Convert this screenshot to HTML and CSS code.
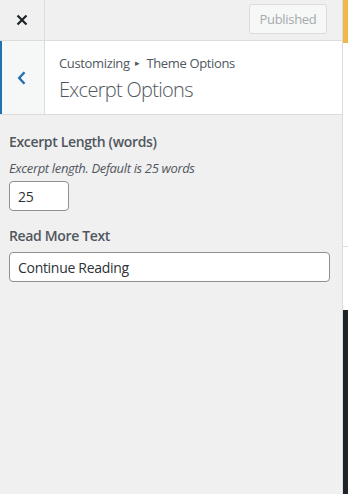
FILE: index.html
```html
<!DOCTYPE html>
<html lang="en">
<head>
    <meta charset="UTF-8">
    <meta name="viewport" content="width=device-width, initial-scale=1.0">
    <title>Customizer</title>
    <link rel="stylesheet" href="styles.css">
</head>
<body>
    <div class="layout">
        <aside class="sidebar">
            <header class="topbar">
                <a href="#" class="close-btn" aria-label="Close">
                    <svg width="12" height="12" viewBox="0 0 12 12"><path d="M1.5 1.5l9 9M10.5 1.5l-9 9" stroke="#1d2327" stroke-width="2.2" fill="none"/></svg>
                </a>
                <div class="topbar-actions">
                    <button class="publish-btn" disabled>Published</button>
                </div>
            </header>
            <div class="section-head">
                <a href="#" class="back-btn" aria-label="Back">
                    <svg width="9" height="14" viewBox="0 0 9 14"><path d="M7.5 1.2L2.2 7l5.3 5.8" stroke="#2271b1" stroke-width="2.4" fill="none"/></svg>
                </a>
                <div class="section-title">
                    <span class="crumbs">Customizing <span class="arrow">&#9656;</span> Theme Options</span>
                    <h2>Excerpt Options</h2>
                </div>
            </div>
            <div class="controls">
                <div class="control">
                    <label for="excerptLength">Excerpt Length (words)</label>
                    <span class="desc">Excerpt length. Default is 25 words</span>
                    <input type="text" id="excerptLength" class="small-input" value="25">
                </div>
                <div class="control">
                    <label for="readMore">Read More Text</label>
                    <input type="text" id="readMore" class="wide-input" value="Continue Reading">
                </div>
            </div>
        </aside>
        <div class="preview">
            <div class="preview-bar"></div>
            <div class="preview-page"></div>
            <div class="preview-dark"></div>
        </div>
    </div>
</body>
</html>
```

FILE: styles.css
```css
* {
    margin: 0;
    padding: 0;
    box-sizing: border-box;
}

body {
    font-family: "Open Sans", "Noto Sans", sans-serif;
    font-size: 13px;
    letter-spacing: -0.35px;
    color: #50575e;
    background-color: #f0f0f1;
}

.layout {
    display: flex;
    height: 494px;
}

.sidebar {
    width: 343px;
    background-color: #f0f0f1;
    border-right: 1px solid #dcdcde;
}

.topbar {
    display: flex;
    height: 41px;
    border-bottom: 1px solid #dcdcde;
}

.close-btn {
    width: 45px;
    display: flex;
    align-items: center;
    justify-content: center;
    border-right: 1px solid #dcdcde;
}

.topbar-actions {
    flex-grow: 1;
    display: flex;
    justify-content: flex-end;
    padding: 4px 15px 0 0;
}

.publish-btn {
    font-family: inherit;
    font-size: 13px;
    letter-spacing: -0.3px;
    height: 30px;
    width: 78px;
    color: #a7aaad;
    background-color: #f6f7f7;
    border: 1px solid #dcdcde;
    border-radius: 3px;
}

.section-head {
    display: flex;
    height: 74px;
    background-color: #fff;
    border-bottom: 1px solid #dcdcde;
}

.back-btn {
    width: 45px;
    display: flex;
    align-items: center;
    justify-content: center;
    padding: 1px 3px 0 0;
    background-color: #f6f7f7;
    border-left: 2px solid #2271b1;
    border-right: 1px solid #dcdcde;
}

.section-title {
    padding: 12px 14px 0 14px;
}

.crumbs {
    display: block;
    font-size: 13px;
    line-height: 20px;
}

.crumbs .arrow {
    font-size: 9px;
    vertical-align: 2px;
    margin: 0 4px 0 2px;
}

.section-title h2 {
    margin-top: 3px;
    font-size: 20px;
    font-weight: 300;
    letter-spacing: -0.7px;
    line-height: 27px;
    color: #50575e;
}

.controls {
    padding: 17px 12px 0 9px;
}

.control {
    margin-bottom: 15px;
}

.control label {
    display: block;
    font-size: 14px;
    font-weight: 600;
    line-height: 20px;
    margin-bottom: 6px;
}

.desc {
    display: block;
    font-style: italic;
    font-size: 13px;
    line-height: 20px;
    margin-bottom: 3px;
}

.small-input, .wide-input {
    font-family: inherit;
    font-size: 14px;
    letter-spacing: -0.3px;
    height: 30px;
    padding: 0 8px;
    color: #2c3338;
    background-color: #fff;
    border: 1px solid #8c8f94;
    border-radius: 4px;
}

.small-input {
    width: 60px;
}

.wide-input {
    width: 321px;
}

.preview {
    flex-grow: 1;
    display: flex;
    flex-direction: column;
}

.preview-bar {
    height: 43px;
    background-color: #f0b849;
}

.preview-page {
    height: 267px;
    background-image: linear-gradient(#fff 203px, #dcdcde 203px, #dcdcde 204px, #fff 204px);
}

.preview-dark {
    flex-grow: 1;
    background-color: #1d2327;
}
```
